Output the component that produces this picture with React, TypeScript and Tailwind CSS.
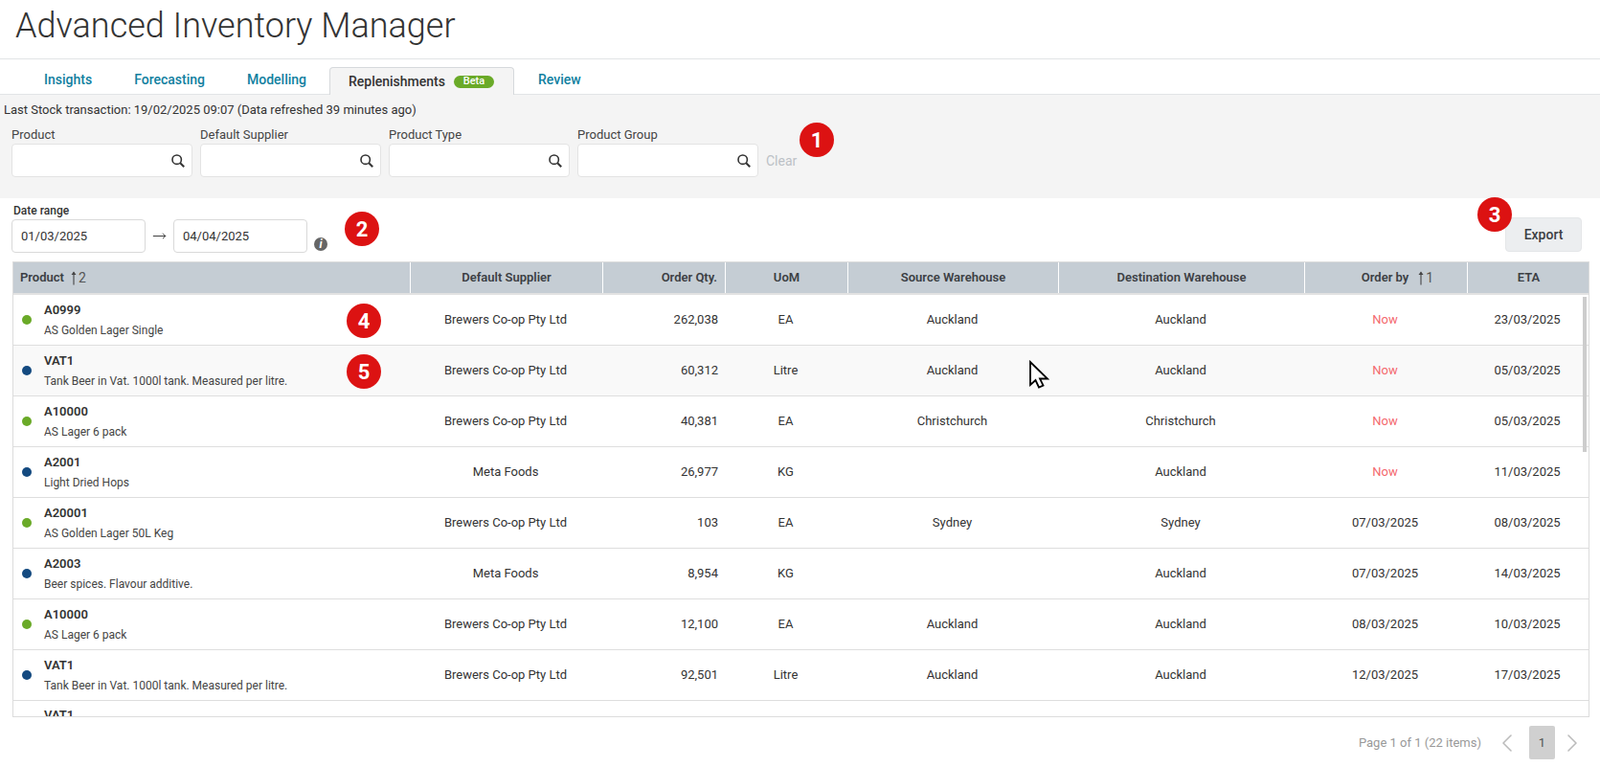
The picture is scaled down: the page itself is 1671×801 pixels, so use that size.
import { ChevronLeft, ChevronRight, MoveRight } from 'lucide-react'

const columns = 'grid grid-cols-[415px_201px_128px_128px_220px_257px_170px_127px]'

const rows = [
  { code: 'A0999', name: 'AS Golden Lager Single', supplier: 'Brewers Co-op Pty Ltd', qty: '262,038', uom: 'EA', source: 'Auckland', dest: 'Auckland', orderBy: 'Now', eta: '23/03/2025', green: true },
  { code: 'VAT1', name: 'Tank Beer in Vat. 1000l tank. Measured per litre.', supplier: 'Brewers Co-op Pty Ltd', qty: '60,312', uom: 'Litre', source: 'Auckland', dest: 'Auckland', orderBy: 'Now', eta: '05/03/2025', green: false },
  { code: 'A10000', name: 'AS Lager 6 pack', supplier: 'Brewers Co-op Pty Ltd', qty: '40,381', uom: 'EA', source: 'Christchurch', dest: 'Christchurch', orderBy: 'Now', eta: '05/03/2025', green: true },
  { code: 'A2001', name: 'Light Dried Hops', supplier: 'Meta Foods', qty: '26,977', uom: 'KG', source: '', dest: 'Auckland', orderBy: 'Now', eta: '11/03/2025', green: false },
  { code: 'A20001', name: 'AS Golden Lager 50L Keg', supplier: 'Brewers Co-op Pty Ltd', qty: '103', uom: 'EA', source: 'Sydney', dest: 'Sydney', orderBy: '07/03/2025', eta: '08/03/2025', green: true },
  { code: 'A2003', name: 'Beer spices. Flavour additive.', supplier: 'Meta Foods', qty: '8,954', uom: 'KG', source: '', dest: 'Auckland', orderBy: '07/03/2025', eta: '14/03/2025', green: false },
  { code: 'A10000', name: 'AS Lager 6 pack', supplier: 'Brewers Co-op Pty Ltd', qty: '12,100', uom: 'EA', source: 'Auckland', dest: 'Auckland', orderBy: '08/03/2025', eta: '10/03/2025', green: true },
  { code: 'VAT1', name: 'Tank Beer in Vat. 1000l tank. Measured per litre.', supplier: 'Brewers Co-op Pty Ltd', qty: '92,501', uom: 'Litre', source: 'Auckland', dest: 'Auckland', orderBy: '12/03/2025', eta: '17/03/2025', green: false },
]

function Marker({ n, className }: { n: number; className: string }) {
  return (
    <div className={`absolute flex h-9 w-9 items-center justify-center rounded-full bg-[#dc1212] text-[22px] font-bold text-white ${className}`}>
      {n}
    </div>
  )
}

function SortArrow() {
  return (
    <svg width="8" height="15" viewBox="0 0 8 15" className="text-[#444]">
      <path d="M4 1.5V14.5" stroke="currentColor" strokeWidth="1.1" fill="none" />
      <path d="M4 0.5L6.5 4H1.5Z" fill="currentColor" />
    </svg>
  )
}

function SearchIcon() {
  return (
    <svg width="14" height="14" viewBox="0 0 14 14" className="text-[#333]">
      <circle cx="5.7" cy="5.7" r="4.7" stroke="currentColor" strokeWidth="1.6" fill="none" />
      <path d="M9.2 9.2L13.2 13.2" stroke="currentColor" strokeWidth="2" fill="none" />
    </svg>
  )
}

function Filter({ label }: { label: string }) {
  return (
    <div className="w-[189px]">
      <div className="h-[18px] text-[13px] leading-[18px] text-[#444]">{label}</div>
      <div className="flex h-[35px] items-center justify-end rounded-[4px] border border-[#e3e3e3] bg-white pr-[7px]">
        <SearchIcon />
      </div>
    </div>
  )
}

function HeadCell({ children, className = '' }: { children: React.ReactNode; className?: string }) {
  return (
    <div className={`flex items-center justify-center border-r border-white text-[13px] font-semibold text-[#3c3f44] last:border-r-0 ${className}`}>
      {children}
    </div>
  )
}

export default function App() {
  return (
    <div className="relative h-[801px] w-[1671px] overflow-hidden bg-white font-[family-name:Roboto,sans-serif] text-[#333]">
      <div className="h-[62px] border-b border-[#e2e4e6] pl-[16px] pt-[4px]">
        <h1 className="text-[36px] font-light leading-[46px] text-[#333]">Advanced Inventory Manager</h1>
      </div>

      {/* Tabs */}
      <div className="flex h-[36px] items-end gap-[2px] pl-[25px] pt-[7px] text-[14px] font-medium text-[#11809f]">
        <div className="flex h-[27px] items-center px-[21px] pb-[2px]">Insights</div>
        <div className="flex h-[27px] items-center px-[21px] pb-[2px]">Forecasting</div>
        <div className="flex h-[27px] items-center px-[21px] pb-[2px]">Modelling</div>
        <div className="relative top-[1px] z-10 ml-[1px] mr-[2px] flex h-[29px] w-[193px] items-center rounded-t-[4px] border border-b-0 border-[#d6d9dc] bg-[#f4f4f4] pl-[19px] text-[#333]">
          Replenishments
          <span className="ml-[9px] flex h-[13px] w-[42px] items-center justify-center rounded-full bg-[#6aaa28] text-[11px] font-medium text-white">Beta</span>
        </div>
        <div className="flex h-[27px] items-center px-[21px] pb-[2px]">Review</div>
      </div>

      {/* Filters */}
      <div className="h-[109px] border-t border-[#e2e4e6] bg-[#f4f4f4]">
        <div className="pl-[4px] pt-[7px] text-[13px] leading-[18px] text-[#333]">
          Last Stock transaction: 19/02/2025 09:07 (Data refreshed 39 minutes ago)
        </div>
        <div className="flex items-end gap-[8px] pl-[12px] pt-[8px]">
          <Filter label="Product" />
          <Filter label="Default Supplier" />
          <Filter label="Product Type" />
          <Filter label="Product Group" />
          <div className="h-[27px] text-[14px] leading-[20px] text-[#bcc1c6]">Clear</div>
        </div>
      </div>

      {/* Date range and export */}
      <div className="flex h-[66px] items-start justify-between pl-[12px] pr-[19px]">
        <div>
          <div className="h-[22px] pl-[2px] pt-[5px] text-[12px] font-medium leading-[16px] text-[#333]">Date range</div>
          <div className="flex items-center">
            <div className="flex h-[35px] w-[140px] items-center rounded-[4px] border border-[#d9d9d9] pl-[9px] text-[13px]">01/03/2025</div>
            <MoveRight size={15} strokeWidth={1.5} className="mx-[7px] text-[#333]" />
            <div className="flex h-[35px] w-[140px] items-center rounded-[4px] border border-[#d9d9d9] pl-[9px] text-[13px]">04/04/2025</div>
            <div className="ml-[7px] mt-[17px] flex h-[14px] w-[14px] items-center justify-center rounded-full bg-[#666] font-['Liberation_Serif',serif] text-[12px] font-bold italic leading-none text-white">i</div>
          </div>
        </div>
        <div className="mt-[20px] flex h-[36px] w-[80px] items-center justify-center rounded-[4px] border border-[#e4e6e8] bg-[#eceef0] text-[14px] font-medium text-[#3c3f44]">Export</div>
      </div>

      {/* Table */}
      <div className="ml-[13px] h-[476px] w-[1647px] overflow-hidden border border-[#dcdcdc]">
        <div className={`${columns} h-[32px] border-b-2 border-[#e2e2e2] bg-[#c5cdd4] box-content`}>
          <HeadCell className="!justify-start gap-[6px] pl-[7px]">
            Product
            <span className="flex items-center gap-[1px] text-[14px] font-normal text-[#555]">
              <SortArrow />2
            </span>
          </HeadCell>
          <HeadCell>Default Supplier</HeadCell>
          <HeadCell className="!justify-end pr-[8px]">Order Qty.</HeadCell>
          <HeadCell>UoM</HeadCell>
          <HeadCell>Source Warehouse</HeadCell>
          <HeadCell>Destination Warehouse</HeadCell>
          <HeadCell className="gap-[9px] pl-[24px]">
            Order by
            <span className="flex items-center gap-[1px] text-[14px] font-normal text-[#555]">
              <SortArrow />1
            </span>
          </HeadCell>
          <HeadCell>ETA</HeadCell>
        </div>

        <div className="relative">
          {rows.map((r, i) => (
            <div key={i} className={`${columns} h-[53px] border-b border-[#dedede] text-[13px] ${i === 1 ? 'bg-[#f9f9f9]' : 'bg-white'}`}>
              <div className="flex items-center pl-[9px]">
                <span className={`h-[10px] w-[10px] rounded-full ${r.green ? 'bg-[#6aaa28]' : 'bg-[#144a80]'}`} />
                <div className="ml-[13px]">
                  <div className="h-[22px] text-[13px] font-semibold leading-[20px] text-[#333]">{r.code}</div>
                  <div className="text-[12px] leading-[18px] text-[#444]">{r.name}</div>
                </div>
              </div>
              <div className="flex items-center justify-center pr-[3px]">{r.supplier}</div>
              <div className="flex items-center justify-end pr-[8px]">{r.qty}</div>
              <div className="flex items-center justify-center pr-[3px]">{r.uom}</div>
              <div className="flex items-center justify-center pr-[3px]">{r.source}</div>
              <div className="flex items-center justify-center pr-[3px]">{r.dest}</div>
              <div className={`flex items-center justify-center pr-[3px] ${r.orderBy === 'Now' ? 'text-[#f4696e]' : ''}`}>{r.orderBy}</div>
              <div className="flex items-center justify-center pr-[3px]">{r.eta}</div>
            </div>
          ))}
          {/* next row peeks in under the scroll edge */}
          <div className="pl-[32px] pt-[8px] text-[13px] font-semibold leading-[13px] text-[#333]">VAT1</div>
          <div className="absolute right-[2px] top-[2px] h-[162px] w-[4px] bg-[#cdcdcd]" />
        </div>
      </div>

      {/* Pagination */}
      <div className="flex h-[35px] items-center justify-end pr-[13px] pt-[9px] box-content text-[13px] text-[#999]">
        <span>Page 1 of 1 (22 items)</span>
        <ChevronLeft size={32} strokeWidth={1.2} className="ml-[11px] text-[#bbb]" />
        <div className="ml-[7px] flex h-[35px] w-[27px] items-center justify-center rounded-[2px] bg-[#d0d0d0] text-[#555]">1</div>
        <ChevronRight size={32} strokeWidth={1.2} className="ml-[2px] text-[#bbb]" />
      </div>

      {/* Annotation overlays */}
      <Marker n={1} className="left-[835px] top-[128px]" />
      <Marker n={2} className="left-[360px] top-[221px]" />
      <Marker n={3} className="left-[1543px] top-[206px]" />
      <Marker n={4} className="left-[362px] top-[317px]" />
      <Marker n={5} className="left-[362px] top-[370px]" />
      <svg width="22" height="30" viewBox="0 0 22 30" className="absolute left-[1074px] top-[376px]">
        <path d="M2 2V26L7.5 21L11 28.5L15.5 26.5L12 19.5H20Z" fill="white" stroke="black" strokeWidth="1.8" strokeLinejoin="miter" />
      </svg>
    </div>
  )
}
